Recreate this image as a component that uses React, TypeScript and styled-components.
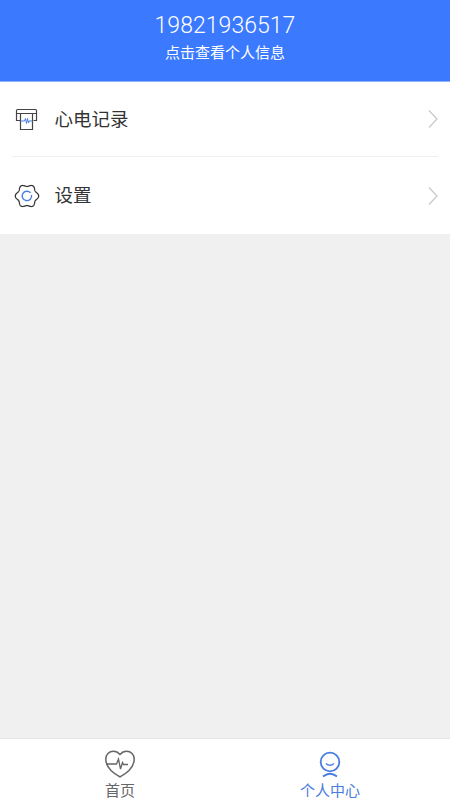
import React from "react";
import styled, { createGlobalStyle } from "styled-components";

const Global = createGlobalStyle`
  html, body { margin: 0; padding: 0; height: 100%; }
  body { font-family: Roboto, "Noto Sans CJK SC", sans-serif; background: #f0f0f0; }
  #root { height: 100%; }
`;

const Page = styled.div`
  width: 450px;
  height: 800px;
  display: flex;
  flex-direction: column;
  overflow: hidden;
`;

const Header = styled.header`
  height: 82px;
  box-sizing: border-box;
  background: #3b79ff;
  border-bottom: 1px solid #8fb2ff;
  display: flex;
  flex-direction: column;
  align-items: center;
  padding-top: 12px;
  color: #fff;
`;

const Phone = styled.div`
  font-size: 23px;
  font-weight: 300;
  line-height: 28px;
  letter-spacing: 0.05px;
`;

const Hint = styled.div`
  font-family: "Noto Sans CJK SC", sans-serif;
  font-size: 15px;
  line-height: 22px;
  margin-top: 1px;
`;

const List = styled.section`
  background: #fff;
  padding: 0 12px;
  display: flex;
  flex-direction: column;
`;

const Row = styled.div<{ $divided?: boolean }>`
  height: ${(p) => (p.$divided ? "74px" : "77px")};
  box-sizing: content-box;
  display: flex;
  align-items: center;
  border-bottom: ${(p) => (p.$divided ? "1px solid #efefef" : "none")};
`;

const RowIcon = styled.svg`
  width: 30px;
  height: 30px;
  flex: none;
  margin-right: 12.5px;
`;

const RowLabel = styled.span`
  flex: 1;
  font-family: "Noto Sans CJK SC", sans-serif;
  font-size: 18.5px;
  color: #333;
  padding-bottom: 3px;
`;

const Chevron = styled.svg`
  width: 10px;
  height: 20px;
  flex: none;
`;

const Spacer = styled.main`
  flex: 1;
  background: #f0f0f0;
`;

const TabBar = styled.nav`
  height: 62px;
  box-sizing: border-box;
  background: #fff;
  border-top: 1px solid #e4e4e4;
  padding: 0 15px;
  display: grid;
  grid-template-columns: 1fr 1fr;
`;

const Tab = styled.div<{ $active?: boolean }>`
  display: flex;
  flex-direction: column;
  align-items: center;
  padding-top: 10px;
  color: ${(p) => (p.$active ? "#4a7de0" : "#666")};
`;

const TabIcon = styled.svg`
  width: 32px;
  height: 30px;
  flex: none;
`;

const TabLabel = styled.span`
  font-family: "Noto Sans CJK SC", sans-serif;
  font-size: 15px;
  line-height: 20px;
  margin-top: 1px;
`;

const gearPath = (() => {
  const pts: string[] = [];
  for (let i = 0; i < 180; i++) {
    const t = (i / 180) * Math.PI * 2;
    const r = 10.6 + 1.1 * Math.cos(6 * t);
    const x = 15 + r * Math.cos(t);
    const y = 15 + r * Math.sin(t);
    pts.push(`${i === 0 ? "M" : "L"}${x.toFixed(2)} ${y.toFixed(2)}`);
  }
  return pts.join(" ") + " Z";
})();

const ChevronIcon = () => (
  <Chevron viewBox="0 0 10 20">
    <path d="M1 1.5 L9 10 L1 18.5" fill="none" stroke="#c8c8c8" strokeWidth="1.2" />
  </Chevron>
);

export default function App() {
  return (
    <Page>
      <Global />
      <Header>
        <Phone>19821936517</Phone>
        <Hint>点击查看个人信息</Hint>
      </Header>
      <List>
        <Row $divided>
          <RowIcon viewBox="0 0 30 30">
            <path d="M8 16.500 H4.500 V6.500 Q4.500 5.500 5.500 5.500 H23.500 Q24.500 5.500 24.500 6.500 V16.500 H21.500" fill="none" stroke="#444" strokeWidth="1.2" />
            <path d="M4.500 9.500 H24.500" fill="none" stroke="#444" strokeWidth="1" />
            <path d="M8.500 9.500 H20.500 V25.500 H8.500 Z" fill="#fff" stroke="#444" strokeWidth="1.2" />
            <path d="M8.500 17 H12.500 L13.500 14.500 L14.500 19.500 L15.500 14.500 L16.500 19 L17 17 H20.500" fill="none" stroke="#4a7de0" strokeWidth="1" />
          </RowIcon>
          <RowLabel>心电记录</RowLabel>
          <ChevronIcon />
        </Row>
        <Row>
          <RowIcon viewBox="0 0 30 30">
            <path d={gearPath} fill="none" stroke="#333" strokeWidth="1.25" />
            <path d="M18.500 11.900 A4.700 4.700 0 1 0 19.500 14" fill="none" stroke="#4a7de0" strokeWidth="1.4" />
          </RowIcon>
          <RowLabel>设置</RowLabel>
          <ChevronIcon />
        </Row>
      </List>
      <Spacer />
      <TabBar>
        <Tab>
          <TabIcon viewBox="0 0 32 30">
            <path d="M16 28 C11 25 1.800 19.500 1.800 10 C1.800 5.500 5 2.300 9.500 2.300 C12 2.300 14 3.300 16 5.500 C18 3.300 20 2.300 22.500 2.300 C27 2.300 30.200 5.500 30.200 10 C30.200 19.500 21 25 16 28 Z" fill="none" stroke="#666" strokeWidth="1.5" />
            <path d="M2 15 H10.500 L12.500 15 L14.500 10 L16.500 20 L18.500 13.500 L19.500 15.500 H24" fill="none" stroke="#666" strokeWidth="1.3" />
          </TabIcon>
          <TabLabel>首页</TabLabel>
        </Tab>
        <Tab $active>
          <TabIcon viewBox="0 0 32 30">
            <circle cx="16" cy="13" r="9.300" fill="none" stroke="#4a7de0" strokeWidth="1.8" />
            <path d="M12 14.500 Q16 18 20 14.500" fill="none" stroke="#4a7de0" strokeWidth="1.5" />
            <path d="M9 27.500 Q16 22 23 27.500" fill="none" stroke="#4a7de0" strokeWidth="1.8" />
          </TabIcon>
          <TabLabel>个人中心</TabLabel>
        </Tab>
      </TabBar>
    </Page>
  );
}
